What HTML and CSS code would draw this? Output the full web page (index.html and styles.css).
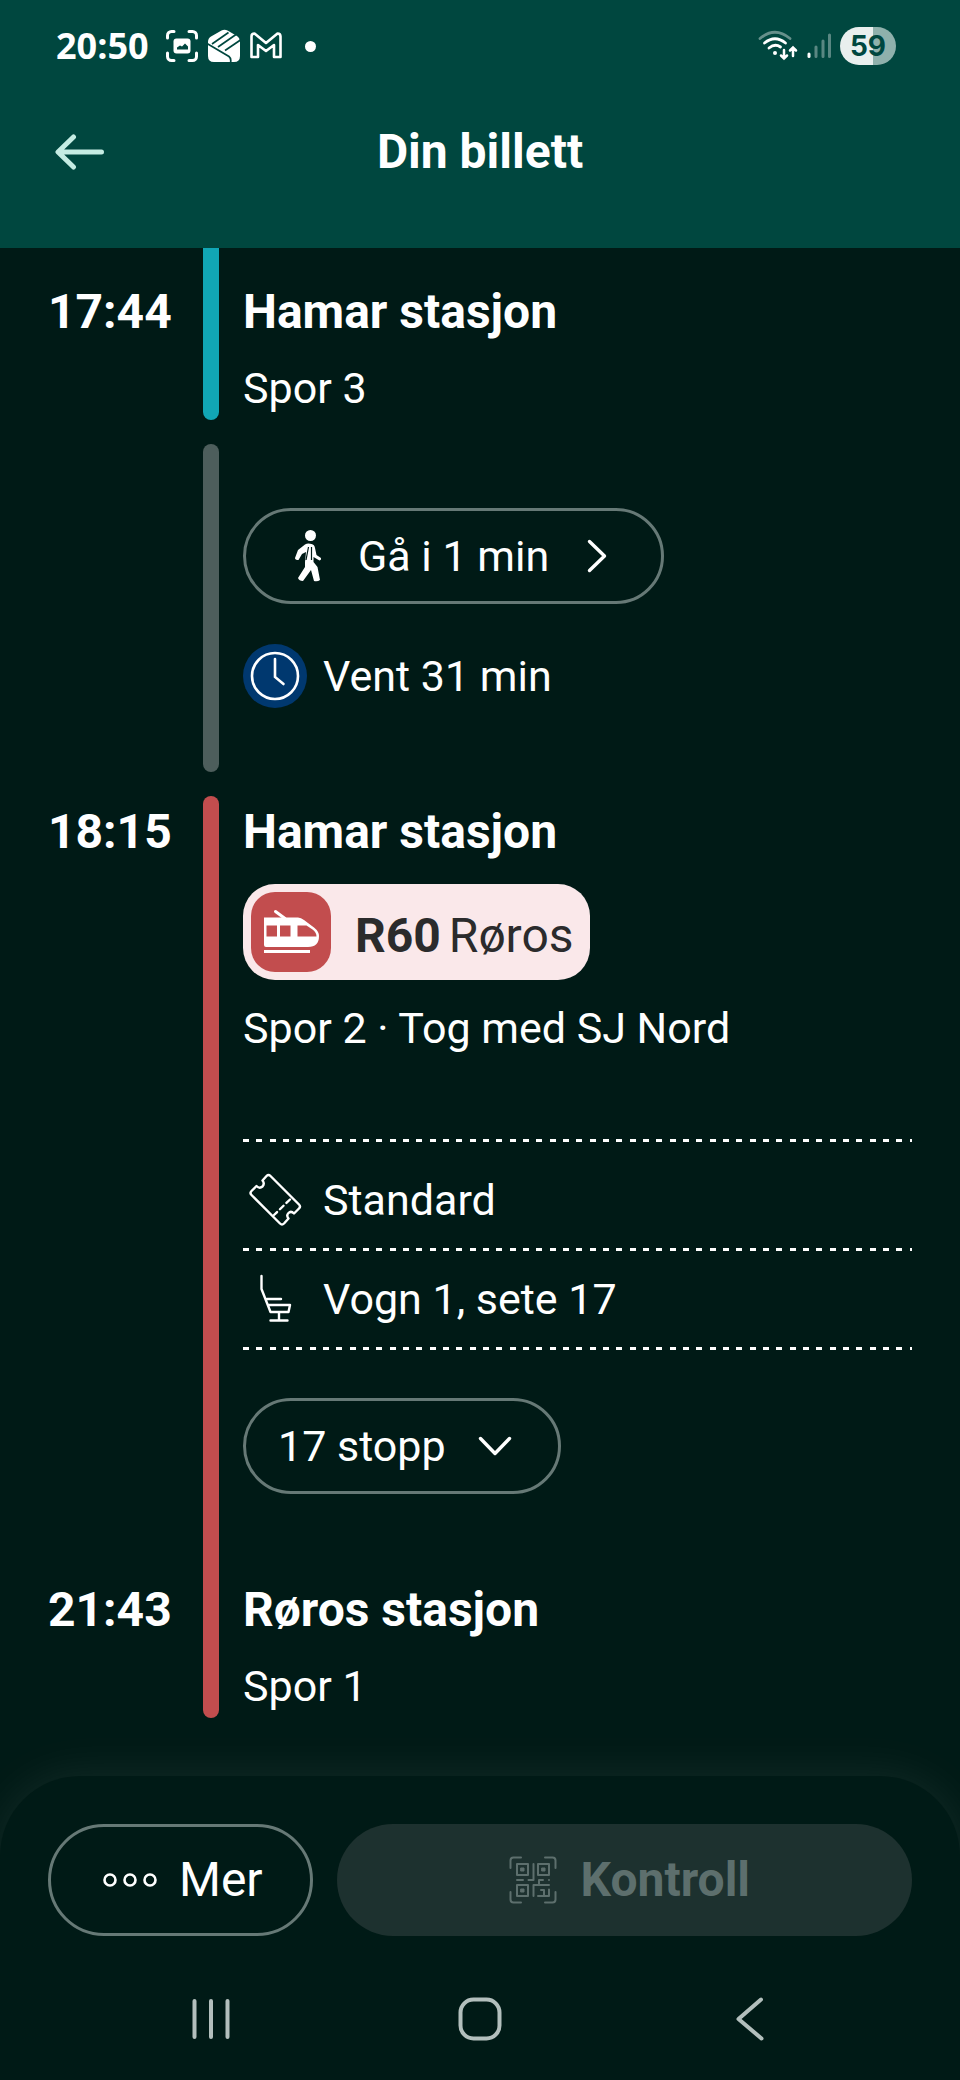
FILE: index.html
```html
<!DOCTYPE html>
<html lang="no">
<head>
<meta charset="utf-8">
<meta name="viewport" content="width=device-width, initial-scale=1">
<title>Din billett</title>
<link rel="stylesheet" href="styles.css">
</head>
<body>
<header class="top">
  <div class="status">
    <time class="clock">20:50</time>
    <div class="status-icons">
      <svg width="34" height="34" viewBox="0 0 34 34" fill="none" stroke="currentColor" stroke-width="3" stroke-linecap="round" aria-hidden="true">
        <path d="M2.500 9V6.500a4 4 0 0 1 4-4H9M24 2.500h3.500a4 4 0 0 1 4 4V9M31.500 24v3.500a4 4 0 0 1-4 4H24M9 31.500H6.500a4 4 0 0 1-4-4V24"/>
        <rect x="8.500" y="9.500" width="17" height="15" rx="3" fill="currentColor" stroke="none"/>
        <path d="M12 20.500v-2l3-2 2 1 3-3 3 3v3z" fill="#00473f" stroke="none"/>
      </svg>
      <svg width="34" height="34" viewBox="0 0 34 34" aria-hidden="true">
        <path d="M1 13q0-4 3-5.500L14.500 1.500q3-1.500 6 0L30 7q3 2 3 5v15q0 6-6 6H7q-6 0-6-6z" fill="currentColor"/>
        <path d="M5 15 21.500 3.500M11 18 29 5.500M18 21.500 33.500 11M0 14.500 22 27.500q2.500 2 1.500 6.500" stroke="#00473f" stroke-width="1.700" fill="none"/>
      </svg>
      <svg width="34" height="34" viewBox="0 0 34 34" fill="none" stroke="currentColor" stroke-width="2.600" stroke-linejoin="round" aria-hidden="true">
        <path d="M2.500 7.500Q2.500 4.500 5.500 4.500L17 14 28.500 4.500Q31.500 4.500 31.500 7.500V28H25V16L17 22 9 16V28H2.500z"/>
      </svg>
      <span class="dot"></span>
    </div>
    <div class="status-right">
      <svg width="40" height="34" viewBox="0 0 40 34" fill="none" stroke="currentColor" stroke-width="2.800" stroke-linecap="round" aria-hidden="true">
        <path d="M2 9.500Q17-3 32 9.500" opacity=".4"/>
        <path d="M6.500 14Q17 5.500 27.500 14M11 19Q17 14 22.500 18"/>
        <circle cx="17" cy="24" r="2" fill="currentColor" stroke="none"/>
        <path d="M26 21v8.500m-3-3 3 3 3-3M35 27v-8.500m-3 3 3-3 3 3" stroke-width="2.500"/>
      </svg>
      <svg width="26" height="34" viewBox="0 0 26 34" stroke="currentColor" stroke-width="3" stroke-linecap="round" aria-hidden="true">
        <path d="M3 25v2.500"/><path d="M10 18v9.500M17 12v15.500M23.500 6v21.500" opacity=".35"/>
      </svg>
      <span class="battery">59</span>
    </div>
  </div>
  <div class="title-bar">
    <button class="back" type="button" aria-label="Tilbake">
      <svg width="50" height="36" viewBox="0 0 50 36" fill="none" stroke="currentColor" stroke-width="5" stroke-linecap="round" stroke-linejoin="round"><path d="M46.500 18H3.500M18.500 3 3 18l15.500 15"/></svg>
    </button>
    <h1 class="title">Din billett</h1>
  </div>
</header>

<main class="journey">
  <section class="leg leg-arrive">
    <time class="time">17:44</time>
    <div class="rail"></div>
    <div class="body">
      <h2 class="station">Hamar stasjon</h2>
      <p class="text">Spor 3</p>
    </div>
  </section>

  <section class="leg leg-transfer">
    <div class="rail"></div>
    <div class="body">
      <button class="pill walk" type="button">
        <svg width="28" height="54" viewBox="0 0 28 54" aria-hidden="true">
          <circle cx="16.500" cy="6.500" r="5.500" fill="currentColor"/>
          <path d="M11 15.500q2.500-1.500 6.500-.5 3 .5 3.500 4l1.500 7 4.500 3q.5 2-1.500 2.500L19.500 28v5l4 5 2.500 13q-2.500 2-6 1L17 41l-8 11q-4 0-5-3l7-11V33l1-10-4 2-3.500 6Q1 31 1 29l3-8z" fill="currentColor"/>
          <path d="M14.500 18l-2.500 13M17.500 18v13" stroke="#001a16" stroke-width="1.200"/>
        </svg>
        <span>Gå i 1 min</span>
        <svg width="20" height="34" viewBox="0 0 20 34" fill="none" stroke="currentColor" stroke-width="3.400" stroke-linecap="round" stroke-linejoin="round" aria-hidden="true"><path d="M2.500 2.500 17.500 17 2.500 31.500"/></svg>
      </button>
      <p class="icon-row">
        <svg width="64" height="64" viewBox="0 0 64 64" aria-hidden="true">
          <circle cx="32" cy="32" r="32" fill="#00386f"/>
          <g fill="none" stroke="#fff" stroke-width="2.600" stroke-linecap="round"><circle cx="32" cy="32" r="23"/><path d="M32 15v18l8.500 7"/></g>
        </svg>
        <span>Vent 31 min</span>
      </p>
    </div>
  </section>

  <section class="leg leg-train">
    <div class="rail"></div>
    <time class="time">18:15</time>
    <div class="body">
      <h2 class="station">Hamar stasjon</h2>
      <p class="line-badge">
        <span class="line-icon">
          <svg width="56" height="46" viewBox="0 0 56 46" aria-hidden="true">
            <path d="M12.500 2.500 22 9.500" stroke="#fff" stroke-width="3" stroke-linecap="round"/>
            <path d="M1 8.500h34q3 0 6 2.500l10 7.500q5 4 5 8.500 0 11-11 11H3q-2 0-2-2V10z" fill="#fff"/>
            <path d="M3.500 16.500h10.500v11H3.500zM17 16.500h10.500v11H17zM34.500 16.500h9l6 4q4 3 4 7h-19z" fill="#c24d4e"/>
            <path d="M1 42.500h46" stroke="#fff" stroke-width="3"/>
          </svg>
        </span>
        <span class="line-name"><b>R60</b><span>Røros</span></span>
      </p>
      <p class="text operator">Spor 2 · Tog med SJ Nord</p>
      <ul class="details">
        <li class="icon-row">
          <svg width="64" height="64" viewBox="0 0 64 64" fill="none" stroke="currentColor" stroke-width="2.400" stroke-linecap="round" stroke-linejoin="round" aria-hidden="true">
            <path d="M23.500 8q2-2 4 0L56 36.500q2 2 0 4l-5 5q-3-3-5.500-.5-2.500 2.500 0 5.500l-4.500 5q-2 2-4 0L8.500 27q-2-2 0-4l5-5q3 3 6 .5 2.500-3 0-6z"/>
            <path d="M47 31.500 31 47" stroke-dasharray="5 4"/>
          </svg>
          <span>Standard</span>
        </li>
        <li class="icon-row">
          <svg width="64" height="64" viewBox="0 0 64 64" fill="none" stroke="currentColor" stroke-width="2.400" stroke-linecap="round" stroke-linejoin="round" aria-hidden="true">
            <path d="M18.500 9v13l9 23h18l1.500-7H25.500M24 32h14M36 45v8.500M27.500 53.500h17"/>
          </svg>
          <span>Vogn 1, sete 17</span>
        </li>
      </ul>
      <button class="pill stops" type="button" aria-expanded="false">
        <span>17 stopp</span>
        <svg width="34" height="20" viewBox="0 0 34 20" fill="none" stroke="currentColor" stroke-width="3.400" stroke-linecap="round" stroke-linejoin="round" aria-hidden="true"><path d="M2.500 2.500 17 17.500 31.500 2.500"/></svg>
      </button>
    </div>
    <time class="time time-end">21:43</time>
    <div class="body body-end">
      <h2 class="station">Røros stasjon</h2>
      <p class="text">Spor 1</p>
    </div>
  </section>
</main>

<footer class="sheet">
  <div class="actions">
    <button class="action more" type="button">
      <svg width="54" height="16" viewBox="0 0 54 16" fill="none" stroke="currentColor" stroke-width="2.600" aria-hidden="true"><circle cx="7" cy="8" r="5.500"/><circle cx="27" cy="8" r="5.500"/><circle cx="47" cy="8" r="5.500"/></svg>
      <span>Mer</span>
    </button>
    <button class="action control" type="button" disabled>
      <svg width="48" height="48" viewBox="0 0 48 48" fill="none" stroke="currentColor" stroke-width="2" stroke-linecap="round" stroke-linejoin="round" aria-hidden="true">
        <path d="M1.500 12V4.500q0-3 3-3H12M36 1.500h7.500q3 0 3 3V12M46.500 36v7.500q0 3-3 3H36M12 46.500H4.500q-3 0-3-3V36"/>
        <rect x="8" y="8" width="11" height="11"/><rect x="29" y="8" width="11" height="11"/><rect x="8" y="29" width="11" height="11"/>
        <path d="M12 12h3v3h-3zM33 12h3v3h-3zM12 33h3v3h-3z" fill="currentColor" stroke-width="1"/>
        <path d="M24.500 8v16h-5M8 24h6M40 24h0M40 29H24.500v11M30 29v-5h4M40 33.500v6.500h-5v-6h-3M29 40h6"/>
      </svg>
      <span>Kontroll</span>
    </button>
  </div>
  <nav class="system-nav" aria-label="Systemnavigasjon">
    <button type="button" aria-label="Nylige apper"><svg width="44" height="44" viewBox="0 0 44 44" stroke="currentColor" stroke-width="4" stroke-linecap="round"><path d="M5.500 4v36M22 4v36M38.500 4v36"/></svg></button>
    <button type="button" aria-label="Hjem"><svg width="44" height="44" viewBox="0 0 44 44" fill="none" stroke="currentColor" stroke-width="4"><rect x="2.500" y="2.500" width="39" height="39" rx="13"/></svg></button>
    <button type="button" aria-label="Tilbake"><svg width="44" height="44" viewBox="0 0 44 44" fill="none" stroke="currentColor" stroke-width="4" stroke-linecap="round" stroke-linejoin="round"><path d="M34 2.500 11.500 22 34.500 41.500"/></svg></button>
  </nav>
</footer>
</body>
</html>
```
FILE: styles.css
```css
:root {
  --bg: #001a16;
  --header: #00473f;
  --outline: #667976;
  --red: #c24d4e;
}

* { box-sizing: border-box; }

body {
  margin: 0;
  min-height: 100vh;
  display: flex;
  flex-direction: column;
  background: var(--bg);
  color: #fff;
  font-family: Roboto, "Liberation Sans", sans-serif;
  font-size: 43px;
  line-height: 64px;
}

h1, h2, p, ul { margin: 0; padding: 0; font-size: inherit; }
ul { list-style: none; }
svg { display: block; flex: none; }

button {
  padding: 0;
  border: 0;
  background: none;
  color: inherit;
  font: inherit;
}

/* Header */
.top {
  background: var(--header);
  padding-bottom: 64px;
}

.status {
  display: flex;
  align-items: center;
  height: 92px;
  padding: 0 64px 0 56px;
}

.clock {
  font-family: "Open Sans", "Noto Sans", sans-serif;
  font-size: 36px;
  font-weight: 700;
}

.status-icons {
  display: flex;
  align-items: center;
  gap: 8px;
  margin-left: 16px;
}

.dot {
  width: 11px;
  height: 11px;
  margin-left: 14px;
  border-radius: 50%;
  background: #fff;
}

.status-right {
  display: flex;
  align-items: center;
  gap: 8px;
  margin-left: auto;
}

.battery {
  width: 56px;
  height: 38px;
  border-radius: 19px;
  background: linear-gradient(90deg, #e9efee 59%, #8fb1ac 59%);
  color: var(--header);
  font-family: Inter, sans-serif;
  font-size: 28px;
  font-weight: 700;
  line-height: 38px;
  text-align: center;
}

.title-bar {
  display: grid;
  grid-template-columns: 1fr auto 1fr;
  align-items: center;
  height: 92px;
  padding: 28px 55px 0;
}

.back {
  justify-self: start;
  color: #c5ece3;
}

.title {
  font-size: 48px;
  font-weight: 700;
}

/* Journey timeline */
.journey {
  flex: 1;
  display: flex;
  flex-direction: column;
  gap: 24px;
  padding: 0 48px 48px;
}

.leg {
  display: grid;
  grid-template-columns: 131px 16px 1fr;
  column-gap: 24px;
}

.rail {
  grid-column: 2;
  grid-row: 1 / span 2;
  border-radius: 8px;
}

.time { grid-column: 1; }
.body { grid-column: 3; }

.time, .station {
  font-size: 48px;
  font-weight: 700;
}

.leg-arrive .rail { background: #11a6b5; border-radius: 0 0 8px 8px; }
.leg-arrive .time, .leg-arrive .body { grid-row: 1; padding-top: 32px; }
.station + .text { margin-top: 12px; }

.leg-transfer .rail { background: #4d5e5c; }
.leg-transfer .body { padding: 64px 0; }

.leg-train .rail { background: var(--red); }
.leg-train .time, .leg-train .body { grid-row: 1; padding-top: 4px; }
.leg-train .time-end, .leg-train .body-end { grid-row: 2; padding-top: 84px; }

.pill {
  display: flex;
  align-items: center;
  height: 96px;
  border: 3px solid var(--outline);
  border-radius: 48px;
}

.walk { padding: 0 54px 0 48px; }
.walk span { margin: 0 38px 0 36px; }
.stops { gap: 32px; margin-top: 48px; padding: 0 46px 0 32px; }

.icon-row {
  display: flex;
  align-items: center;
  gap: 16px;
}

.pill + .icon-row { margin-top: 40px; }

.line-badge {
  display: flex;
  align-items: center;
  gap: 24px;
  width: fit-content;
  margin-top: 20px;
  padding: 8px 16px 8px 8px;
  border-radius: 32px;
  background: #fae8ea;
  color: #2b2b2c;
  font-size: 48px;
}

.line-icon {
  display: grid;
  place-items: center;
  width: 80px;
  height: 80px;
  border-radius: 24px;
  background: var(--red);
}

.line-name {
  display: flex;
  gap: 8px;
  padding-top: 8px;
}

.operator { margin-top: 16px; }

/* Rows separated by dashed rules, three dashes per 40px tile */
.details {
  --dashes: repeating-linear-gradient(90deg, #fff 0 6px, transparent 6px 13px, #fff 13px 19px, transparent 19px 27px, #fff 27px 33px, transparent 33px 40px);
  margin-top: 79px;
  padding-top: 13px;
  background: var(--dashes) top / 100% 3px no-repeat;
}

.details li {
  padding: 16px 0 19px;
  background: var(--dashes) bottom / 100% 3px no-repeat;
}

/* Bottom sheet */
.sheet {
  padding: 48px 48px 0;
  border-radius: 80px 80px 0 0;
  background: var(--bg);
  box-shadow: 0 0 48px rgba(255, 255, 255, 0.08);
}

.actions {
  display: flex;
  gap: 24px;
}

.action {
  display: flex;
  align-items: center;
  justify-content: center;
  height: 112px;
  border-radius: 56px;
  font-size: 48px;
}

.more {
  gap: 22px;
  padding: 0 47px 0 52px;
  border: 3px solid var(--outline);
}

.control {
  flex: 1;
  gap: 24px;
  padding-left: 10px;
  background: #1d312f;
  color: #5d6f6d;
  font-weight: 700;
}

.system-nav {
  display: flex;
  justify-content: space-around;
  align-items: center;
  height: 144px;
  padding: 22px 28px 0;
  color: #b3bfbd;
}
```
